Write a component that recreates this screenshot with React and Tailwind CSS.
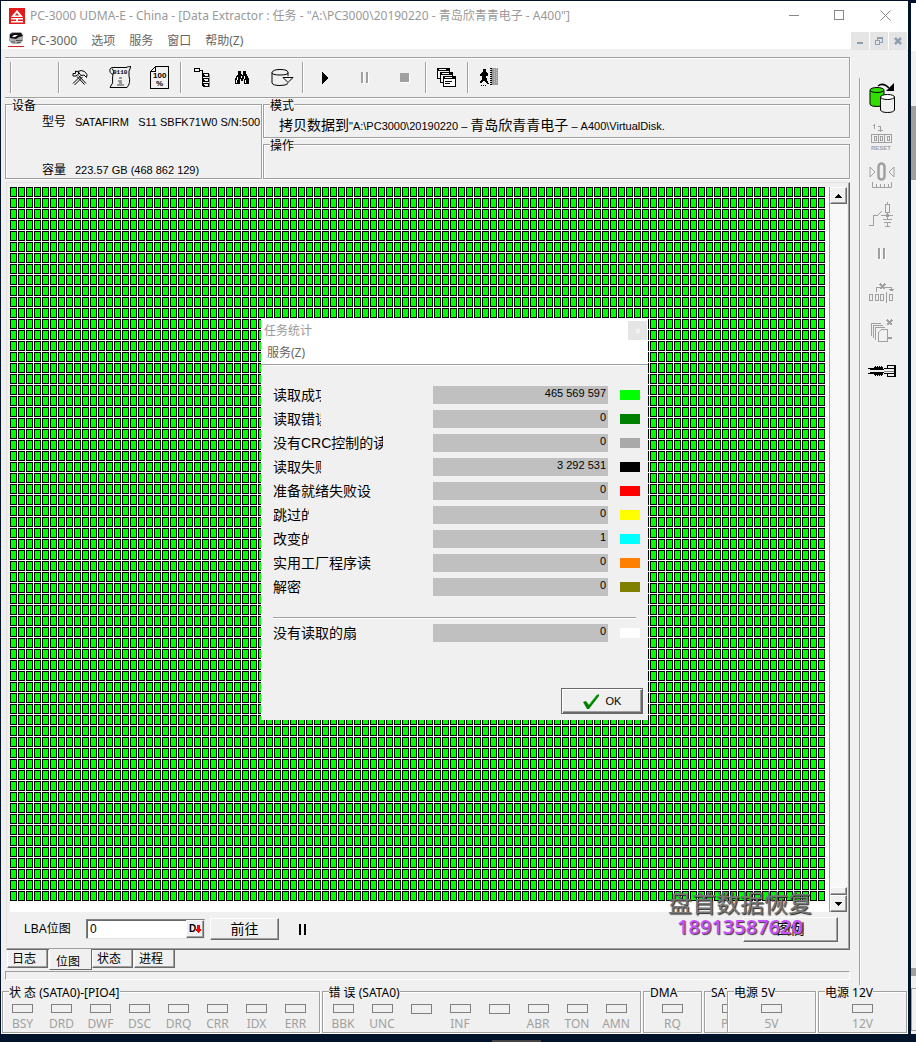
import { useState } from 'react';

const UI = "font-['Noto_Sans','Noto_Sans_CJK_SC',sans-serif]";
const CLASSIC = "font-['Liberation_Sans','Noto_Sans_CJK_SC',sans-serif]";
const ETCHED = 'border border-[#a0a0a0] shadow-[1px_1px_0_#fff,inset_1px_1px_0_#fff]';
const RAISED =
  'bg-[#f0f0f0] border border-t-white border-l-white border-r-[#696969] border-b-[#696969] shadow-[inset_-1px_-1px_0_#a0a0a0]';

const STATS = [
  { label: '读取成功', clip: 'w-12', value: '465 569 597', color: 'bg-[#00ff00]' },
  { label: '读取错误', clip: 'w-12', value: '0', color: 'bg-[#008000]' },
  { label: '没有CRC控制的读取', clip: 'w-[110px]', value: '0', color: 'bg-[#a9a9a9]' },
  { label: '读取失败', clip: 'w-12', value: '3 292 531', color: 'bg-black' },
  { label: '准备就绪失败设', clip: 'w-[110px]', value: '0', color: 'bg-[#ff0000]' },
  { label: '跳过的', clip: 'w-9', value: '0', color: 'bg-[#ffff00]' },
  { label: '改变的', clip: 'w-9', value: '1', color: 'bg-[#00ffff]' },
  { label: '实用工厂程序读', clip: 'w-[110px]', value: '0', color: 'bg-[#ff8000]' },
  { label: '解密', clip: 'w-9', value: '0', color: 'bg-[#808000]' },
];

const STATE_LEDS = ['BSY', 'DRD', 'DWF', 'DSC', 'DRQ', 'CRR', 'IDX', 'ERR'];
const ERROR_LEDS = ['BBK', 'UNC', '', 'INF', '', 'ABR', 'TON', 'AMN'];
const TABS = ['日志', '位图', '状态', '进程'];

function Icon({ w, h, children, stroke = '#000', smooth = false }) {
  return (
    <svg
      width={w}
      height={h}
      viewBox={`0 0 ${w} ${h}`}
      fill="none"
      stroke={stroke}
      strokeWidth="1"
      shapeRendering={smooth ? 'auto' : 'crispEdges'}
      aria-hidden="true"
    >
      {children}
    </svg>
  );
}

const toolsIcon = (
  <Icon w={16} h={16} smooth>
    <path d="M1 13.500 L9 5.500 M2.500 15 L10.500 7" />
    <path d="M5 6.500 L12.500 14.500 M6.500 5.500 L14 13.500" />
    <path d="M6 1.500 Q9 -.5 12.500 1.500 L15 4.500 L14.500 7.500 L12 5 L9 5.500 Z" fill="#f0f0f0" />
    <path d="M3.500 1 V3.500 H1 V6 H4 L6.500 4 V2 Z" />
  </Icon>
);

const scrollIcon = (
  <Icon w={22} h={23} smooth>
    <path d="M4 8.500 Q0 7 1 3 Q2 1 5 1.500 L17 1.500 Q19 .5 22 .5 Q19 5 20 10 Q22 17 18 21.500 H1 Q5 17 3.500 12 Z M4 8.500 Q6 5 3 2.500" />
    <text x="4" y="8" fontSize="6" fontWeight="bold" fill="#000" stroke="none" fontFamily="Liberation Mono">0110</text>
    <path d="M10 11h3v2h-3z M9 14h4v4h2v2H8v-2h2v-2H9z" fill="#999" stroke="none" />
  </Icon>
);

const pageIcon = (
  <Icon w={20} h={24}>
    <path d="M5.500 .5 H18.500 V22.500 H.5 V5.500 Z M5.500 .5 V5.500 H.5" />
    <text x="3" y="12" fontSize="8" fontWeight="bold" fill="#000" stroke="none" fontFamily="Liberation Sans">100</text>
    <text x="6" y="20" fontSize="8" fontWeight="bold" fill="#000" stroke="none" fontFamily="Liberation Sans">%</text>
  </Icon>
);

const treeIcon = (
  <Icon w={17} h={20}>
    <path d="M.5 .5h5v3h-5z M5 2.500h4 M8.500 2v15h2 M8 7.500h3 M8 12.500h3" />
    <path d="M9.500 5.500h5v3h-5z M9.500 10.500h5v3h-5z M9.500 15.500h5v3h-5z" />
    <path d="M15.500 6v13" stroke="#888" />
  </Icon>
);

const binocularsIcon = (
  <Icon w={16} h={14}>
    <path d="M4 0h3v3l1 1 1-1V0h3v3l1 1 2 4v5h-5V8H9v2H7V8H6v5H1V8l2-4 1-1z" fill="#000" stroke="none" />
    <path d="M3.500 6v3 M2.500 9v3 M10.500 5v3 M11.500 9v3 M7.500 5v2" stroke="#fff" />
  </Icon>
);

const diskIcon = (
  <Icon w={23} h={18} smooth>
    <path d="M1 3.500 Q2 .5 9 .5 Q17 .5 17 3.500 Q17 6 9 6 Q1 6 1 3.500 V14 Q2 16.500 9 16.500 Q15 16.500 17 14.500 M17 3.500 V7" />
    <path d="M12 8.500 H22 L17 13.500 Z" fill="#f0f0f0" />
  </Icon>
);

const playIcon = (
  <Icon w={6} h={12}><path d="M0 0l6 6-6 6z" fill="#000" stroke="none" /></Icon>
);

const pauseIcon = (
  <Icon w={9} h={12} stroke="none">
    <path d="M1 1h2v11H1z M6 1h2v11H6z" fill="#fff" />
    <path d="M0 0h2v11H0z M5 0h2v11H5z" fill="#a0a0a0" />
  </Icon>
);

const stopIcon = (
  <Icon w={10} h={10} stroke="none">
    <path d="M1 1h9v9H1z" fill="#fff" />
    <path d="M0 0h9v9H0z" fill="#a0a0a0" />
  </Icon>
);

const windowsIcon = (
  <Icon w={20} h={20}>
    <path d="M.5 .5h12v10H.5z" fill="#f0f0f0" />
    <path d="M0 0h13v3H0z" fill="#000" stroke="none" />
    <path d="M3.500 4.500h12v10h-12z" fill="#f0f0f0" />
    <path d="M3 4h13v3H3z" fill="#000" stroke="none" />
    <path d="M6.500 8.500h12v10h-12z" fill="#fff" />
    <path d="M6 8h13v3H6z" fill="#000" stroke="none" />
    <path d="M8 13.500h7 M8 15.500h5" />
    <path d="M2 1.500h7 M5 5.500h7 M8 9.500h7" stroke="#fff" />
  </Icon>
);

const exitIcon = (
  <Icon w={20} h={19}>
    <path d="M4 1h3v3l2 2v2H7l1 4 2 4H8l-3-4-2 3H1v-2l2-2V8H1V6l2-2h1z" fill="#000" stroke="none" />
    <path d="M2 17.500h6" strokeDasharray="1 1" />
    <path d="M12 0h7v17h-7z" fill="#999" stroke="none" />
    <path d="M11.500 0v17" strokeWidth="2" strokeDasharray="1 1" />
    <path d="M15.500 1v16 M17.500 0v16" stroke="#ccc" strokeDasharray="1 1" />
  </Icon>
);

const copyDiskIcon = (
  <Icon w={26} h={30} smooth>
    <path d="M1 7.500v14q1 2 7 2t7-2v-14" fill="#33dd00" />
    <ellipse cx="8" cy="7" rx="7" ry="2.500" fill="#33dd00" />
    <path d="M11.500 14v13q1 2.500 7 2.500t7-2.500V14" fill="#f0f0f0" />
    <ellipse cx="18.500" cy="14" rx="7" ry="2.500" fill="#fff" />
    <path d="M9 3 Q14 -1 20 5" strokeWidth="1.500" />
    <path d="M25 0v8h-8z" fill="#000" stroke="none" />
  </Icon>
);

const resetIcon = (
  <Icon w={24} h={28} stroke="#a0a0a0">
    <path d="M3 2.500h2 M4.500 1v5 M8 3.500h3 M10.500 3v6 M8 7.500h5" />
    <path d="M1.500 11.500h20v8h-20z M8.500 12v7 M14.500 12v7 M4 13.500h2v4H4z M10.500 13.500h2v4h-2z M17.500 13.500h2v4h-2z" />
    <text x="1" y="27" fontSize="6" fontWeight="bold" fill="#a0a0a0" stroke="none" fontFamily="Liberation Sans">RESET</text>
  </Icon>
);

const zeroIcon = (
  <Icon w={26} h={27} stroke="#a0a0a0" smooth>
    <path d="M1 5v10l5-5z M25 5v10l-5-5z" />
    <rect x="9.500" y="1.500" width="6" height="16" rx="3" strokeWidth="2.500" />
    <path d="M3.500 20v5.500h19V20 M7.500 22v3 M11.500 22v3 M15.500 22v3 M19.500 22v3" />
  </Icon>
);

const circuitIcon = (
  <Icon w={26} h={26} stroke="#a0a0a0">
    <path d="M0 23.500h4.500V13.500h4l4-4 M12 13.500h12 M18.500 0v3 M16.500 2.500h4v8h-4z M18.500 11v7 M14 17.500h9 M15 20.500h7 M18.500 21v3 M16 24.500h5" />
    <path d="M17 12h3v3h-3z" fill="#a0a0a0" stroke="none" />
  </Icon>
);

const skipIcon = (
  <Icon w={26} h={20} stroke="#a0a0a0">
    <path d="M7.500 9V4.500h4 M16 4.500h6.500V8 M20 6.500h5 M21 7.500h3" />
    <path d="M11 1l5 5 M16 1l-5 5" strokeWidth="2" />
    <path d="M.5 11.500h3v6h-3z M6.500 11.500h3v6h-3z M11.500 11.500h3v6h-3z M17.500 9v11 M20.500 11.500h3v6h-3z" />
  </Icon>
);

const pagesIcon = (
  <Icon w={24} h={25} stroke="#a0a0a0">
    <path d="M1.500 16.500V4.500h9 M3.500 18.500V6.500h9 M5.500 20.500V8.500h9" />
    <path d="M8.500 22.500v-9l3-3h6v12z" fill="#f0f0f0" />
    <path d="M17 18h5v2h-5z" fill="#a0a0a0" stroke="none" />
    <path d="M17 1l5 5 M22 1l-5 5" strokeWidth="2" />
  </Icon>
);

const plugIcon = (
  <Icon w={28} h={14}>
    <path d="M0 4.500h8 M0 9.500h8 M2 5.500h14 M2 8.500h14" />
    <path d="M6 3h9v3H6z M6 8h9v3H6z" fill="#000" stroke="none" />
    <path d="M7 2.500h8 M7 11.500h8" strokeDasharray="1 1" />
    <path d="M16 4.500h10 M16 9.500h10 M19 1.500h8 M19 12.500h8 M19.500 1v4 M19.500 9v4" />
    <path d="M26 1h2v12h-2z" fill="#000" stroke="none" />
    <path d="M16 7h10" stroke="#888" />
  </Icon>
);

function LogoIcon() {
  return (
    <svg width="16" height="16" viewBox="0 0 16 16" aria-hidden="true">
      <rect width="16" height="16" fill="#e31b1b" />
      <path d="M8 2L14 9H11.500L8 5 4.500 9H2z M2 10h12v1.500H2z M5 7.500h6V9H5z M7 10h2v4H7z M2 13h12v1.500H2z" fill="#fff" />
    </svg>
  );
}

function DriveIcon() {
  return (
    <svg width="16" height="15" viewBox="0 0 16 15" aria-hidden="true">
      <path d="M1 3L4 0h9l2 3v6l-4 3H5L1 9z" fill="#aaa" />
      <path d="M2 2l3-1h8l2 3-4 1-3 2-6-1z" fill="#111" />
      <path d="M6 3h4l-3 2H4z" fill="#fff" />
      <path d="M8 8.500h6 M3 10h4 M9 10.500h4" stroke="#555" />
      <path d="M0 14.500h16" stroke="#e31b1b" />
    </svg>
  );
}

function ToolButton({ label, icon, disabled }) {
  return (
    <button type="button" aria-label={label} disabled={disabled} className="w-10 flex items-center justify-center">
      {icon}
    </button>
  );
}

function Separator() {
  return <span className="w-[2px] my-1 bg-[#a0a0a0] border-r border-white" />;
}

function Group({ title, className, children }) {
  return (
    <section className={`relative ${ETCHED} ${className}`}>
      <h2 className="absolute left-1.5 -top-[7px] bg-[#f0f0f0] leading-4 whitespace-nowrap">{title}</h2>
      {children}
    </section>
  );
}

function TitleBar() {
  return (
    <header className={`bg-white text-xs ${UI}`}>
      <div className="h-[29px] flex items-center pl-2 text-[#999]">
        <LogoIcon />
        <h1 className="ml-[5px] flex-1 whitespace-nowrap">
          PC-3000 UDMA-E - China - [Data Extractor : 任务 - "A:\PC3000\20190220 - 青岛欣青青电子 - A400"]
        </h1>
        <div className="flex">
          <button type="button" aria-label="Minimize" className="w-[45px] flex justify-center">
            <Icon w={11} h={11} stroke="#888"><path d="M0 5.500h10" /></Icon>
          </button>
          <button type="button" aria-label="Maximize" className="w-[45px] flex justify-center">
            <Icon w={11} h={11} stroke="#888"><path d="M.5 .5h9v9h-9z" /></Icon>
          </button>
          <button type="button" aria-label="Close" className="w-[46px] flex justify-center">
            <Icon w={11} h={11} stroke="#888" smooth><path d="M.5 .5l10 10 M10.500 .5l-10 10" /></Icon>
          </button>
        </div>
      </div>
      <nav className="h-[19px] flex items-start pl-[7px] pr-px pt-[2px] text-[#666]">
        <DriveIcon />
        <div className="flex-1 flex gap-[14px] ml-[7px] leading-[18px]">
          <button type="button">PC-3000</button>
          <button type="button">选项</button>
          <button type="button">服务</button>
          <button type="button">窗口</button>
          <button type="button">帮助(Z)</button>
        </div>
        <div className="flex gap-px">
          <button type="button" aria-label="Minimize document" className="w-[18px] h-[18px] bg-[#e5e5e5] flex items-center justify-center">
            <Icon w={8} h={8} stroke="#8ea0b0"><path d="M1 6h6" strokeWidth="2" /></Icon>
          </button>
          <button type="button" aria-label="Restore document" className="w-[18px] h-[18px] bg-[#e5e5e5] flex items-center justify-center">
            <Icon w={8} h={8} stroke="#8ea0b0"><path d="M.5 3.500h4v4h-4z M2.500 3V1.500h5v4H5 M0 3.500h5 M2 .5h6" /></Icon>
          </button>
          <button type="button" aria-label="Close document" className="w-[18px] h-[18px] bg-[#e5e5e5] flex items-center justify-center">
            <Icon w={8} h={8} stroke="#8ea0b0" smooth><path d="M1 1l6 6 M7 1l-6 6" strokeWidth="2.500" /></Icon>
          </button>
        </div>
      </nav>
    </header>
  );
}

function Toolbar() {
  return (
    <div className="h-[41px] flex border border-l-0 border-[#a0a0a0] shadow-[1px_1px_0_#fff,inset_0_1px_0_#fff] pl-[5px]">
      <Separator />
      <span className="w-[46px]" />
      <Separator />
      <ToolButton label="工具" icon={toolsIcon} />
      <ToolButton label="信息" icon={scrollIcon} />
      <ToolButton label="百分比" icon={pageIcon} />
      <Separator />
      <ToolButton label="目录" icon={treeIcon} />
      <ToolButton label="查找" icon={binocularsIcon} />
      <ToolButton label="磁盘" icon={diskIcon} />
      <Separator />
      <span className="w-px" />
      <ToolButton label="开始" icon={playIcon} />
      <ToolButton label="暂停" icon={pauseIcon} disabled />
      <ToolButton label="停止" icon={stopIcon} disabled />
      <Separator />
      <ToolButton label="窗口" icon={windowsIcon} />
      <Separator />
      <ToolButton label="退出" icon={exitIcon} />
    </div>
  );
}

function InfoPanels() {
  return (
    <div className="mt-1.5 h-[75px] flex gap-px text-xs shrink-0">
      <Group title="设备" className="w-[257px] flex flex-col justify-between pt-2">
        <p className="flex items-center pl-9 leading-[18px] whitespace-nowrap overflow-hidden">
          <span className="w-[33px]">型号</span>
          <span className="text-[11px] whitespace-pre">SATAFIRM   S11 SBFK71W0 S/N:500</span>
        </p>
        <p className="flex items-center pl-9 leading-4">
          <span className="w-[33px]">容量</span>
          <span className="text-[11px]">223.57 GB (468 862 129)</span>
        </p>
      </Group>
      <div className="flex-1 flex flex-col justify-between">
        <Group title="模式" className="h-[34px] pt-[11px] pl-[15px] leading-[18px] whitespace-nowrap">
          <span className="text-sm leading-[18px]">拷贝数据到</span>
          <span className="text-[11px]">"A:\PC3000\20190220 – </span>
          <span className="text-sm leading-[18px]">青岛欣青青电子</span>
          <span className="text-[11px]"> – A400\VirtualDisk.</span>
        </Group>
        <Group title="操作" className="h-[35px]" />
      </div>
    </div>
  );
}

function SectorMap() {
  return (
    <div className="flex-1 flex bg-white min-h-0">
      <div className="flex-1 min-w-0 pb-[11px] pr-[3px]">
        <svg className="block w-full h-full" role="img" aria-label="位图">
          <defs>
            <pattern id="sector" width="8" height="11" patternUnits="userSpaceOnUse">
              <rect width="7" height="10" fill="#000" />
              <rect x="1" y="1" width="5" height="8" fill="#00ff00" />
            </pattern>
          </defs>
          <rect width="100%" height="100%" fill="url(#sector)" shapeRendering="crispEdges" />
        </svg>
      </div>
      <div className="w-[18px] flex flex-col border-l border-[#a0a0a0] bg-[#f8f8f8]">
        <button type="button" aria-label="Scroll up" className={`h-[17px] flex items-center justify-center ${RAISED}`}>
          <Icon w={7} h={4} stroke="none"><path d="M3 0h1v1h1v1h1v1h1v1H0V3h1V2h1V1h1z" fill="#000" /></Icon>
        </button>
        <div className="flex-1" />
        <div className={`h-2 ${RAISED}`} />
        <button type="button" aria-label="Scroll down" className={`h-[17px] flex items-center justify-center ${RAISED}`}>
          <Icon w={7} h={4} stroke="none"><path d="M0 0h7v1H6v1H5v1H4v1H3V3H2V2H1V1H0z" fill="#000" /></Icon>
        </button>
      </div>
    </div>
  );
}

function LbaBar() {
  const [lba, setLba] = useState('0');
  return (
    <div className="relative h-[37px] flex items-center pl-3.5 pr-[9px] pb-[3px] text-xs">
      <label htmlFor="lba" className="w-[62px] whitespace-nowrap">LBA位图</label>
      <div className="w-[119px] h-5 flex bg-white border border-t-[#808080] border-l-[#808080] border-r-[#e3e3e3] border-b-[#e3e3e3] shadow-[inset_1px_1px_0_#696969]">
        <input
          id="lba"
          value={lba}
          onChange={(e) => setLba(e.target.value)}
          className="flex-1 min-w-0 pl-[3px] bg-transparent outline-none"
        />
        <button type="button" aria-label="进制" className={`w-[18px] flex items-center justify-center text-[10px] font-bold ${RAISED}`}>
          D
          <Icon w={5} h={8} stroke="none"><path d="M1 0h3v4h1v1L3 8H2L0 5V4h1z" fill="#f00" /></Icon>
        </button>
      </div>
      <button type="button" className={`ml-[5px] w-[69px] h-[22px] text-sm leading-4 ${RAISED}`}>前往</button>
      <button type="button" aria-label="暂停" className="ml-5">
        <Icon w={7} h={11} stroke="none"><path d="M0 0h2v11H0z M5 0h2v11H5z" fill="#000" /></Icon>
      </button>
      <button type="button" className={`ml-auto w-[95px] h-[25px] text-sm leading-4 ${RAISED}`}>图例</button>
      <div className={`pointer-events-none absolute right-[31px] -top-[23px] w-[152px] whitespace-nowrap text-center font-['Open_Sans','Noto_Sans_CJK_SC',sans-serif]`}>
        <div className="text-2xl leading-7 text-[#777] [text-shadow:1px_1px_1px_#222]">盘首数据恢复</div>
        <div className="text-xl leading-5 font-semibold text-[#c850ff] [text-shadow:1px_1px_1px_#333]">18913587620</div>
      </div>
    </div>
  );
}

function Tabs() {
  const [active, setActive] = useState('位图');
  return (
    <div className="flex items-start h-[21px] pl-0.5 text-xs" role="tablist">
      {TABS.map((tab) => (
        <button
          key={tab}
          type="button"
          role="tab"
          aria-selected={tab === active}
          onClick={() => setActive(tab)}
          className={
            tab === active
              ? 'w-[43px] h-[21px] -mt-px pt-1.5 pl-1.5 text-left leading-3 bg-[#f0f0f0] border-l border-b border-r border-l-white border-b-[#696969] border-r-[#696969]'
              : 'w-[41px] h-[18px] mr-px pl-1 text-left bg-[#f0f0f0] border-l border-b border-r border-l-white border-b-[#696969] border-r-[#696969] shadow-[inset_-1px_-1px_0_#a0a0a0]'
          }
        >
          {tab}
        </button>
      ))}
    </div>
  );
}

function Sidebar() {
  return (
    <aside className="w-[58px] pl-[9px] pt-[29px] flex">
      <span className="w-[2px] bg-[#a0a0a0] border-r border-white" />
      <div className="flex-1 flex flex-col pr-[5px]">
        {[
          ['复制', copyDiskIcon],
          ['复位', resetIcon],
          ['校准', zeroIcon],
          ['电源', circuitIcon],
          ['暂停', pauseIcon],
          ['跳过', skipIcon],
          ['任务', pagesIcon],
          ['连接', plugIcon],
        ].map(([label, icon]) => (
          <button key={label} type="button" aria-label={label} className="h-[39px] flex items-center justify-center">
            {icon}
          </button>
        ))}
      </div>
    </aside>
  );
}

function Led({ name }) {
  return (
    <div className="w-[39px] flex flex-col items-center shrink-0">
      <span className="w-[21px] h-[11px] border border-[#808080]" />
      <span className="h-4 mt-[3px] leading-4 text-[#a0a0a0]">{name}</span>
    </div>
  );
}

function StatusBar() {
  return (
    <footer className={`h-[49px] flex gap-[2px] pt-1.5 pb-px px-px text-xs ${UI}`}>
      <Group title="状 态 (SATA0)-[PIO4]" className="flex-[318] min-w-0 flex pt-3">
        {STATE_LEDS.map((name) => <Led key={name} name={name} />)}
      </Group>
      <Group title="错 误 (SATA0)" className="flex-[319] min-w-0 flex pt-3 pl-px">
        {ERROR_LEDS.map((name, i) => <Led key={i} name={name} />)}
      </Group>
      <Group title="DMA" className="w-[59px] flex justify-center pt-3"><Led name="RQ" /></Group>
      <div className="w-[23px] -mt-2 pt-2 overflow-hidden -mr-[2px]">
        <Group title="SATA" className="w-[59px] h-full flex pt-3 pl-2"><Led name="PHY" /></Group>
      </div>
      <Group title="电源 5V" className="w-[89px] flex justify-center pt-3"><Led name="5V" /></Group>
      <Group title="电源 12V" className="w-[89px] flex justify-center pt-3"><Led name="12V" /></Group>
    </footer>
  );
}

function StatRow({ label, clip, value, color }) {
  return (
    <div className="h-[18px] flex items-center">
      <dt className="w-40">
        <span className={`block overflow-hidden whitespace-nowrap text-sm leading-5 ${clip}`}>{label}</span>
      </dt>
      <dd className="w-[175px] h-[18px] pr-0.5 bg-[#c0c0c0] text-right text-[11px] leading-[14px]">{value}</dd>
      <span className={`ml-3 w-5 h-[10px] ${color}`} />
    </div>
  );
}

function StatsDialog() {
  return (
    <div role="dialog" aria-label="任务统计" className="absolute inset-x-0 top-[318px] mx-auto w-[387px] h-[401px] bg-[#f0f0f0]">
      <div className={`h-[45px] bg-white text-xs ${UI}`}>
        <div className="flex items-start justify-between pl-[3px] pt-[2px] pr-px h-[22px]">
          <h2 className="leading-5 text-[#999]">任务统计</h2>
          <button type="button" aria-label="关闭" className="w-[19px] h-[19px] bg-[#e5e5e5] flex items-center justify-center">
            <Icon w={6} h={6} stroke="#f6f6f6" smooth><path d="M1 1l4 4 M5 1l-4 4" strokeWidth="1.500" /></Icon>
          </button>
        </div>
        <button type="button" className="ml-1.5 leading-6 text-[#666]">服务(Z)</button>
      </div>
      <div className="h-[2px] bg-[#a0a0a0] border-b border-white" />
      <dl className="pl-3 pt-5 flex flex-col gap-1.5">
        {STATS.map((row) => <StatRow key={row.label} {...row} />)}
      </dl>
      <hr className="mt-[21px] mx-3 border-t-[#a0a0a0] shadow-[0_1px_0_#fff]" />
      <dl className="pl-3 mt-1.5">
        <StatRow label="没有读取的扇" clip="w-[110px]" value="0" color="bg-white" />
      </dl>
      <div className="flex justify-end mt-[46px] pr-[5px]">
        <button
          type="button"
          className="w-[82px] h-[26px] flex items-center justify-center gap-1.5 text-xs bg-[#f0f0f0] border border-[#696969] shadow-[inset_1px_1px_0_#fff,inset_-1px_-1px_0_#696969,inset_-2px_-2px_0_#a0a0a0]"
        >
          <svg width="17" height="15" viewBox="0 0 17 15" aria-hidden="true">
            <path d="M0 8L3 7l3 4L14 1l2-1v2L6 15H4z" fill="#008000" />
            <path d="M6 11L14 1" stroke="#20c020" />
          </svg>
          <span className="text-[11px]">OK</span>
        </button>
      </div>
    </div>
  );
}

export default function App() {
  return (
    <div className={`h-screen flex flex-col bg-[#00132b] pt-px pl-px text-black ${CLASSIC}`}>
      <div className="flex-1 min-h-0 flex">
        <div className="relative flex-1 min-w-0 flex flex-col bg-[#f0f0f0]">
          <TitleBar />
          <main className="flex-1 min-h-0 flex">
            <div className="flex-1 min-w-0 flex flex-col pl-1 pt-2">
              <Toolbar />
              <InfoPanels />
              <div className="mt-[3px] ml-px flex-1 min-h-0 flex flex-col pt-1 pl-[3px] pr-[2px] border-t border-l border-t-[#e3e3e3] border-l-[#e3e3e3] border-r border-b border-r-[#696969] border-b-[#696969] shadow-[inset_-1px_-1px_0_#a0a0a0]">
                <SectorMap />
                <LbaBar />
              </div>
              <Tabs />
              <div className="h-[9px] mb-[5px] border border-t-[#a0a0a0] border-l-[#a0a0a0] border-r-white border-b-white" />
            </div>
            <Sidebar />
          </main>
          <StatusBar />
          <StatsDialog />
        </div>
        <div className="ml-[3px] mt-[2px] w-[5px] bg-[#f0f0f0] flex flex-col">
          <div className="h-12 bg-white" />
          <div className="mt-[55px] h-[74px] bg-[#a0a0a0]" />
          <div className="mt-auto h-2 bg-[#a0a0a0]" />
          <div className="mt-3 mb-[3px] h-[43px] border-y border-l border-[#a0a0a0]" />
        </div>
      </div>
      <div className="h-2 flex items-end justify-center pl-[116px]">
        <span className="w-[49px] h-[2px] bg-[#444]" />
      </div>
    </div>
  );
}
